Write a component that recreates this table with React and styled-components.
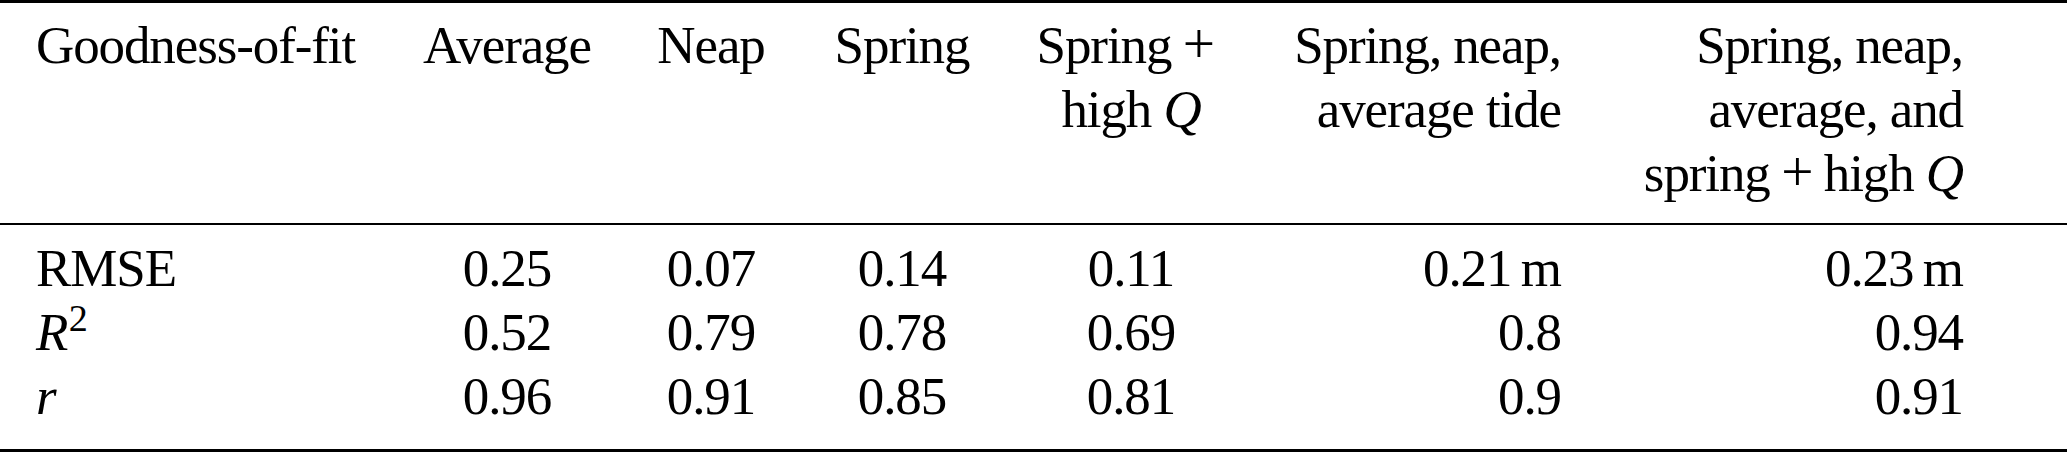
import styled, { createGlobalStyle } from "styled-components";

const GlobalStyle = createGlobalStyle`
  html, body {
    margin: 0;
    padding: 0;
    background: #fff;
  }
  body {
    font-family: "Liberation Serif", "Times New Roman", serif;
    color: #000;
  }
`;

const columns = "363px 216px 192px 190px 268px 296px 402px";

const Table = styled.div`
  width: 2067px;
  border-top: 3px solid #000;
  border-bottom: 3px solid #000;
  font-size: 53px;
  letter-spacing: -1.1px;
  line-height: 64px;
`;

const Head = styled.div`
  display: grid;
  grid-template-columns: ${columns};
  padding: 10px 0 18px 36px;
  border-bottom: 2px solid #000;
`;

const Body = styled.div`
  display: grid;
  grid-template-columns: ${columns};
  padding: 11px 0 21px 36px;
`;

const Cell = styled.div`
  text-align: ${(p) => p.$align || "center"};
  white-space: nowrap;
`;

const M = styled.i`
  font-style: italic;
`;

const Op = styled.span`
  margin: 0 0.2em;
  font-size: 1.08em;
  line-height: 0;
`;

const Sup = styled.span`
  font-size: 0.72em;
  line-height: 0;
  vertical-align: 19px;
  margin-left: 0.04em;
`;

const aligns = ["left", "center", "center", "center", "center", "right", "right"];

const header = [
  "Goodness-of-fit",
  "Average",
  "Neap",
  "Spring",
  <>
    Spring<Op>+</Op>
    <br />
    high <M>Q</M>
  </>,
  <>
    Spring, neap,<br />
    average tide
  </>,
  <>
    Spring, neap,<br />
    average, and<br />
    spring<Op>+</Op>high <M>Q</M>
  </>,
];

const rows = [
  ["RMSE", "0.25", "0.07", "0.14", "0.11", "0.21\u2009m", "0.23\u2009m"],
  [
    <>
      <M>R</M>
      <Sup>2</Sup>
    </>,
    "0.52", "0.79", "0.78", "0.69", "0.8", "0.94",
  ],
  [<M>r</M>, "0.96", "0.91", "0.85", "0.81", "0.9", "0.91"],
];

export default function App() {
  return (
    <>
      <GlobalStyle />
      <Table>
        <Head>
          {header.map((h, i) => (
            <Cell key={i} $align={aligns[i]}>
              {h}
            </Cell>
          ))}
        </Head>
        <Body>
          {rows.map((row, r) =>
            row.map((c, i) => (
              <Cell key={`${r}-${i}`} $align={aligns[i]}>
                {c}
              </Cell>
            ))
          )}
        </Body>
      </Table>
    </>
  );
}
